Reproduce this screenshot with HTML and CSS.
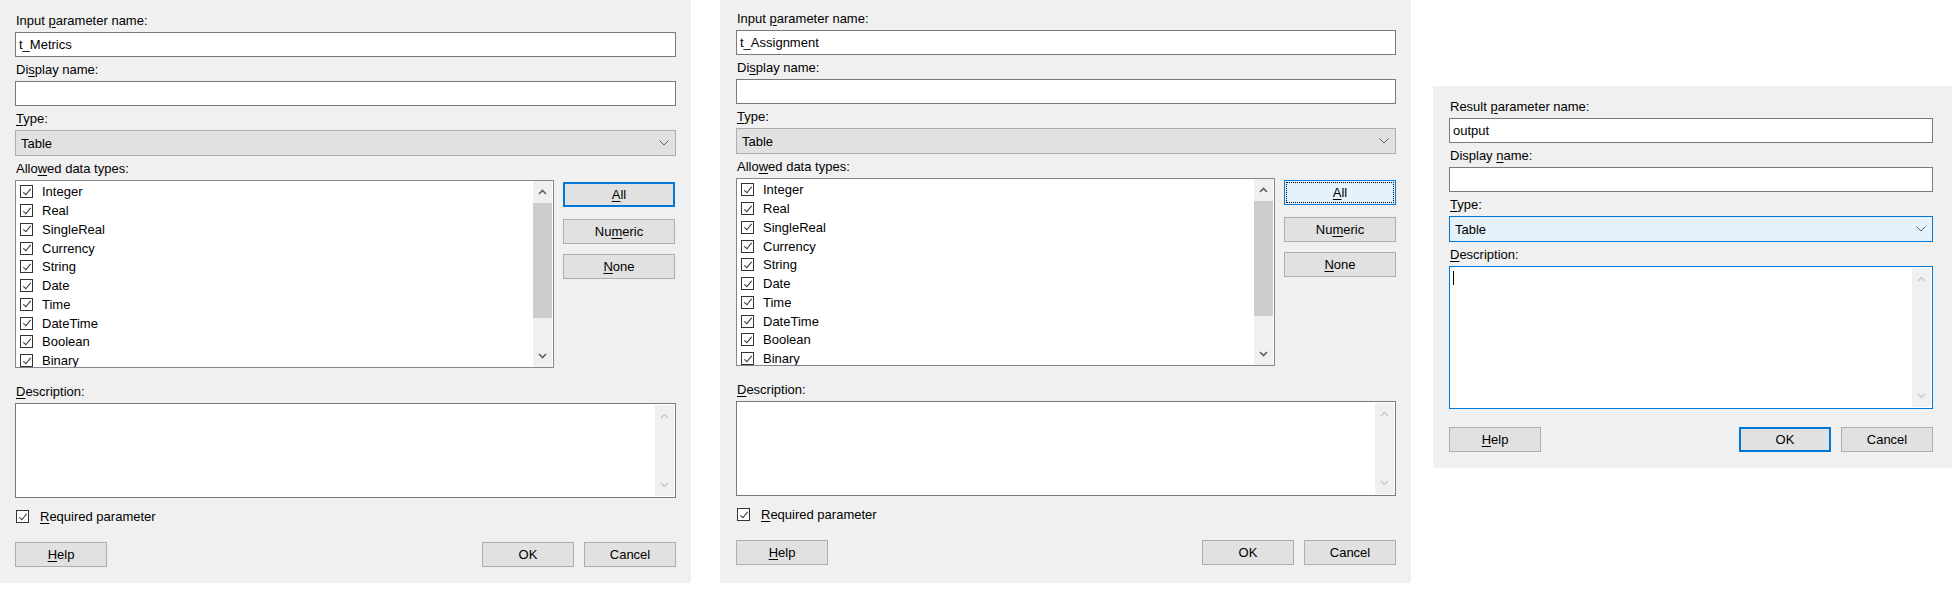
FILE: index.html
```html
<!DOCTYPE html>
<html lang="en">
<head>
<meta charset="utf-8">
<title>Parameter dialogs</title>
<link rel="stylesheet" href="styles.css">
</head>
<body>
<div class="screen">

  <section class="dlg dlg-a">
    <div class="lbl">Input <u>p</u>arameter name:</div>
    <div class="field">t_Metrics</div>
    <div class="lbl">Di<u>s</u>play name:</div>
    <div class="field"></div>
    <div class="lbl"><u>T</u>ype:</div>
    <div class="combo"><span>Table</span><svg class="chev" width="10" height="6" viewBox="0 0 10 6"><polyline points="0.5,0.5 5,5 9.5,0.5" fill="none" stroke="#5a5a5a" stroke-width="1"/></svg></div>
    <div class="lbl">Allo<u>w</u>ed data types:</div>
    <div class="types">
      <div class="list">
        <div class="items">
          <div class="item"><span class="chk"></span>Integer</div>
          <div class="item"><span class="chk"></span>Real</div>
          <div class="item"><span class="chk"></span>SingleReal</div>
          <div class="item"><span class="chk"></span>Currency</div>
          <div class="item"><span class="chk"></span>String</div>
          <div class="item"><span class="chk"></span>Date</div>
          <div class="item"><span class="chk"></span>Time</div>
          <div class="item"><span class="chk"></span>DateTime</div>
          <div class="item"><span class="chk"></span>Boolean</div>
          <div class="item"><span class="chk"></span>Binary</div>
        </div>
        <div class="sbar">
          <div class="sarrow"><svg width="9" height="6" viewBox="0 0 9 6"><polyline points="1,5 4.5,1.5 8,5" fill="none" stroke="#606060" stroke-width="1.6"/></svg></div>
          <div class="thumb"></div>
          <div class="strack"></div>
          <div class="sarrow"><svg width="9" height="6" viewBox="0 0 9 6"><polyline points="1,1 4.5,4.5 8,1" fill="none" stroke="#606060" stroke-width="1.6"/></svg></div>
        </div>
      </div>
      <div class="side">
        <div class="btn btn-default first"><u>A</u>ll</div>
        <div class="btn second">Nu<u>m</u>eric</div>
        <div class="btn third"><u>N</u>one</div>
      </div>
    </div>
    <div class="lbl desc"><u>D</u>escription:</div>
    <div class="memo">
      <div class="sbar off">
        <div class="sarrow"><svg width="9" height="6" viewBox="0 0 9 6"><polyline points="1,5 4.5,1.5 8,5" fill="none" stroke="#c4c4c4" stroke-width="1.2"/></svg></div>
        <div class="strack"></div>
        <div class="sarrow"><svg width="9" height="6" viewBox="0 0 9 6"><polyline points="1,1 4.5,4.5 8,1" fill="none" stroke="#c4c4c4" stroke-width="1.2"/></svg></div>
      </div>
    </div>
    <div class="req"><span class="chk"></span><span><u>R</u>equired parameter</span></div>
    <div class="foot">
      <div class="btn"><u>H</u>elp</div>
      <div class="spacer"></div>
      <div class="btn">OK</div>
      <div class="btn">Cancel</div>
    </div>
  </section>

  <section class="dlg dlg-b">
    <div class="lbl">Input <u>p</u>arameter name:</div>
    <div class="field">t_Assignment</div>
    <div class="lbl">Di<u>s</u>play name:</div>
    <div class="field"></div>
    <div class="lbl"><u>T</u>ype:</div>
    <div class="combo"><span>Table</span><svg class="chev" width="10" height="6" viewBox="0 0 10 6"><polyline points="0.5,0.5 5,5 9.5,0.5" fill="none" stroke="#5a5a5a" stroke-width="1"/></svg></div>
    <div class="lbl">Allo<u>w</u>ed data types:</div>
    <div class="types">
      <div class="list">
        <div class="items">
          <div class="item"><span class="chk"></span>Integer</div>
          <div class="item"><span class="chk"></span>Real</div>
          <div class="item"><span class="chk"></span>SingleReal</div>
          <div class="item"><span class="chk"></span>Currency</div>
          <div class="item"><span class="chk"></span>String</div>
          <div class="item"><span class="chk"></span>Date</div>
          <div class="item"><span class="chk"></span>Time</div>
          <div class="item"><span class="chk"></span>DateTime</div>
          <div class="item"><span class="chk"></span>Boolean</div>
          <div class="item"><span class="chk"></span>Binary</div>
        </div>
        <div class="sbar">
          <div class="sarrow"><svg width="9" height="6" viewBox="0 0 9 6"><polyline points="1,5 4.5,1.5 8,5" fill="none" stroke="#606060" stroke-width="1.6"/></svg></div>
          <div class="thumb"></div>
          <div class="strack"></div>
          <div class="sarrow"><svg width="9" height="6" viewBox="0 0 9 6"><polyline points="1,1 4.5,4.5 8,1" fill="none" stroke="#606060" stroke-width="1.6"/></svg></div>
        </div>
      </div>
      <div class="side">
        <div class="btn btn-focus first"><u>A</u>ll</div>
        <div class="btn second">Nu<u>m</u>eric</div>
        <div class="btn third"><u>N</u>one</div>
      </div>
    </div>
    <div class="lbl desc"><u>D</u>escription:</div>
    <div class="memo">
      <div class="sbar off">
        <div class="sarrow"><svg width="9" height="6" viewBox="0 0 9 6"><polyline points="1,5 4.5,1.5 8,5" fill="none" stroke="#c4c4c4" stroke-width="1.2"/></svg></div>
        <div class="strack"></div>
        <div class="sarrow"><svg width="9" height="6" viewBox="0 0 9 6"><polyline points="1,1 4.5,4.5 8,1" fill="none" stroke="#c4c4c4" stroke-width="1.2"/></svg></div>
      </div>
    </div>
    <div class="req"><span class="chk"></span><span><u>R</u>equired parameter</span></div>
    <div class="foot">
      <div class="btn"><u>H</u>elp</div>
      <div class="spacer"></div>
      <div class="btn">OK</div>
      <div class="btn">Cancel</div>
    </div>
  </section>

  <section class="dlg dlg-c">
    <div class="lbl">Result <u>p</u>arameter name:</div>
    <div class="field">output</div>
    <div class="lbl">Display <u>n</u>ame:</div>
    <div class="field"></div>
    <div class="lbl"><u>T</u>ype:</div>
    <div class="combo combo-focus"><span>Table</span><svg class="chev" width="10" height="6" viewBox="0 0 10 6"><polyline points="0.5,0.5 5,5 9.5,0.5" fill="none" stroke="#5a5a5a" stroke-width="1"/></svg></div>
    <div class="lbl"><u>D</u>escription:</div>
    <div class="memo memo-focus">
      <div class="memo-text"><span class="caret"></span></div>
      <div class="sbar off">
        <div class="sarrow"><svg width="9" height="6" viewBox="0 0 9 6"><polyline points="1,5 4.5,1.5 8,5" fill="none" stroke="#c4c4c4" stroke-width="1.2"/></svg></div>
        <div class="strack"></div>
        <div class="sarrow"><svg width="9" height="6" viewBox="0 0 9 6"><polyline points="1,1 4.5,4.5 8,1" fill="none" stroke="#c4c4c4" stroke-width="1.2"/></svg></div>
      </div>
    </div>
    <div class="foot foot-c">
      <div class="btn"><u>H</u>elp</div>
      <div class="spacer"></div>
      <div class="btn btn-default">OK</div>
      <div class="btn">Cancel</div>
    </div>
  </section>

</div>
</body>
</html>
```

FILE: styles.css
```css
html, body {
  margin: 0;
  padding: 0;
  background: #ffffff;
}

body {
  font-family: "Liberation Sans", Arial, sans-serif;
  font-size: 13px;
  color: #000000;
}

u {
  text-decoration: underline;
  text-underline-offset: 2px;
}

.screen {
  display: flex;
  align-items: flex-start;
}

.dlg {
  box-sizing: border-box;
  background: #f0f0f0;
  display: flex;
  flex-direction: column;
}

.dlg-a {
  width: 691px;
  padding: 8px 15px 16px 15px;
}

.dlg-b {
  width: 691px;
  margin-left: 29px;
  padding: 6px 15px 18px 16px;
}

.dlg-c {
  width: 519px;
  margin-left: 22px;
  margin-top: 86px;
  padding: 8px 19px 16px 16px;
}

.lbl {
  line-height: 17px;
  padding: 4px 0 3px 1px;
  white-space: nowrap;
}

.lbl.desc {
  margin-top: 11px;
}

.field {
  box-sizing: border-box;
  height: 25px;
  border: 1px solid #7a7a7a;
  background: #ffffff;
  padding: 0 3px;
  line-height: 23px;
}

.combo {
  box-sizing: border-box;
  height: 26px;
  border: 1px solid #adadad;
  background: #e1e1e1;
  display: flex;
  align-items: center;
  justify-content: space-between;
  padding: 0 6px 0 5px;
}

.combo-focus {
  background: #e5f1fb;
  border-color: #0078d7;
}

.chev {
  display: block;
}

.types {
  display: flex;
  gap: 9px;
  height: 188px;
}

.list {
  box-sizing: border-box;
  width: 539px;
  height: 188px;
  border: 1px solid #828790;
  background: #ffffff;
  display: flex;
  overflow: hidden;
}

.items {
  flex: 1;
  padding-top: 1.5px;
  overflow: hidden;
}

.item {
  height: 18.75px;
  display: flex;
  align-items: center;
  gap: 9px;
  padding-left: 4px;
  white-space: nowrap;
}

.chk {
  position: relative;
  flex: none;
  box-sizing: border-box;
  width: 13px;
  height: 13px;
  border: 1px solid #333333;
  background: #ffffff;
}

.chk::after {
  content: "";
  position: absolute;
  left: 3.5px;
  top: 0.5px;
  width: 3px;
  height: 7px;
  border: solid #333333;
  border-width: 0 1px 1px 0;
  transform: rotate(40deg);
}

.sbar {
  flex: none;
  width: 19px;
  margin-right: 1px;
  background: #f0f0f0;
  display: flex;
  flex-direction: column;
}

.sarrow {
  height: 22px;
  display: flex;
  align-items: center;
  justify-content: center;
}

.sarrow svg {
  display: block;
}

.thumb {
  height: 115px;
  background: #cdcdcd;
}

.strack {
  flex: 1;
}

.side {
  width: 112px;
  display: flex;
  flex-direction: column;
}

.btn {
  box-sizing: border-box;
  height: 25px;
  width: 92px;
  border: 1px solid #adadad;
  background: #e1e1e1;
  text-align: center;
  line-height: 23px;
  white-space: nowrap;
}

.side .btn {
  width: 112px;
}

.side .first {
  margin-top: 2px;
}

.side .second {
  margin-top: 12px;
}

.side .third {
  margin-top: 10px;
}

.btn-default {
  border: 2px solid #0078d7;
  line-height: 21px;
}

.btn-focus {
  border-color: #0078d7;
  background: #e5f1fb;
  outline: 1px dotted #000000;
  outline-offset: -3px;
}

.memo {
  box-sizing: border-box;
  height: 95px;
  border: 1px solid #7a7a7a;
  background: #ffffff;
  padding: 1px 0 1px 3px;
  display: flex;
}

.memo .sbar {
  margin-left: auto;
}

.memo-text {
  flex: 1;
  padding-top: 3px;
}

.memo-focus {
  height: 143px;
  border-color: #0078d7;
}

.caret {
  display: block;
  width: 1px;
  height: 14px;
  background: #000000;
}

.req {
  margin-top: 12px;
  height: 13px;
  display: flex;
  align-items: center;
  gap: 11px;
  padding-left: 1px;
  white-space: nowrap;
}

.foot {
  margin-top: 19px;
  display: flex;
  gap: 10px;
}

.foot-c {
  margin-top: 18px;
}

.spacer {
  flex: 1;
}
```
